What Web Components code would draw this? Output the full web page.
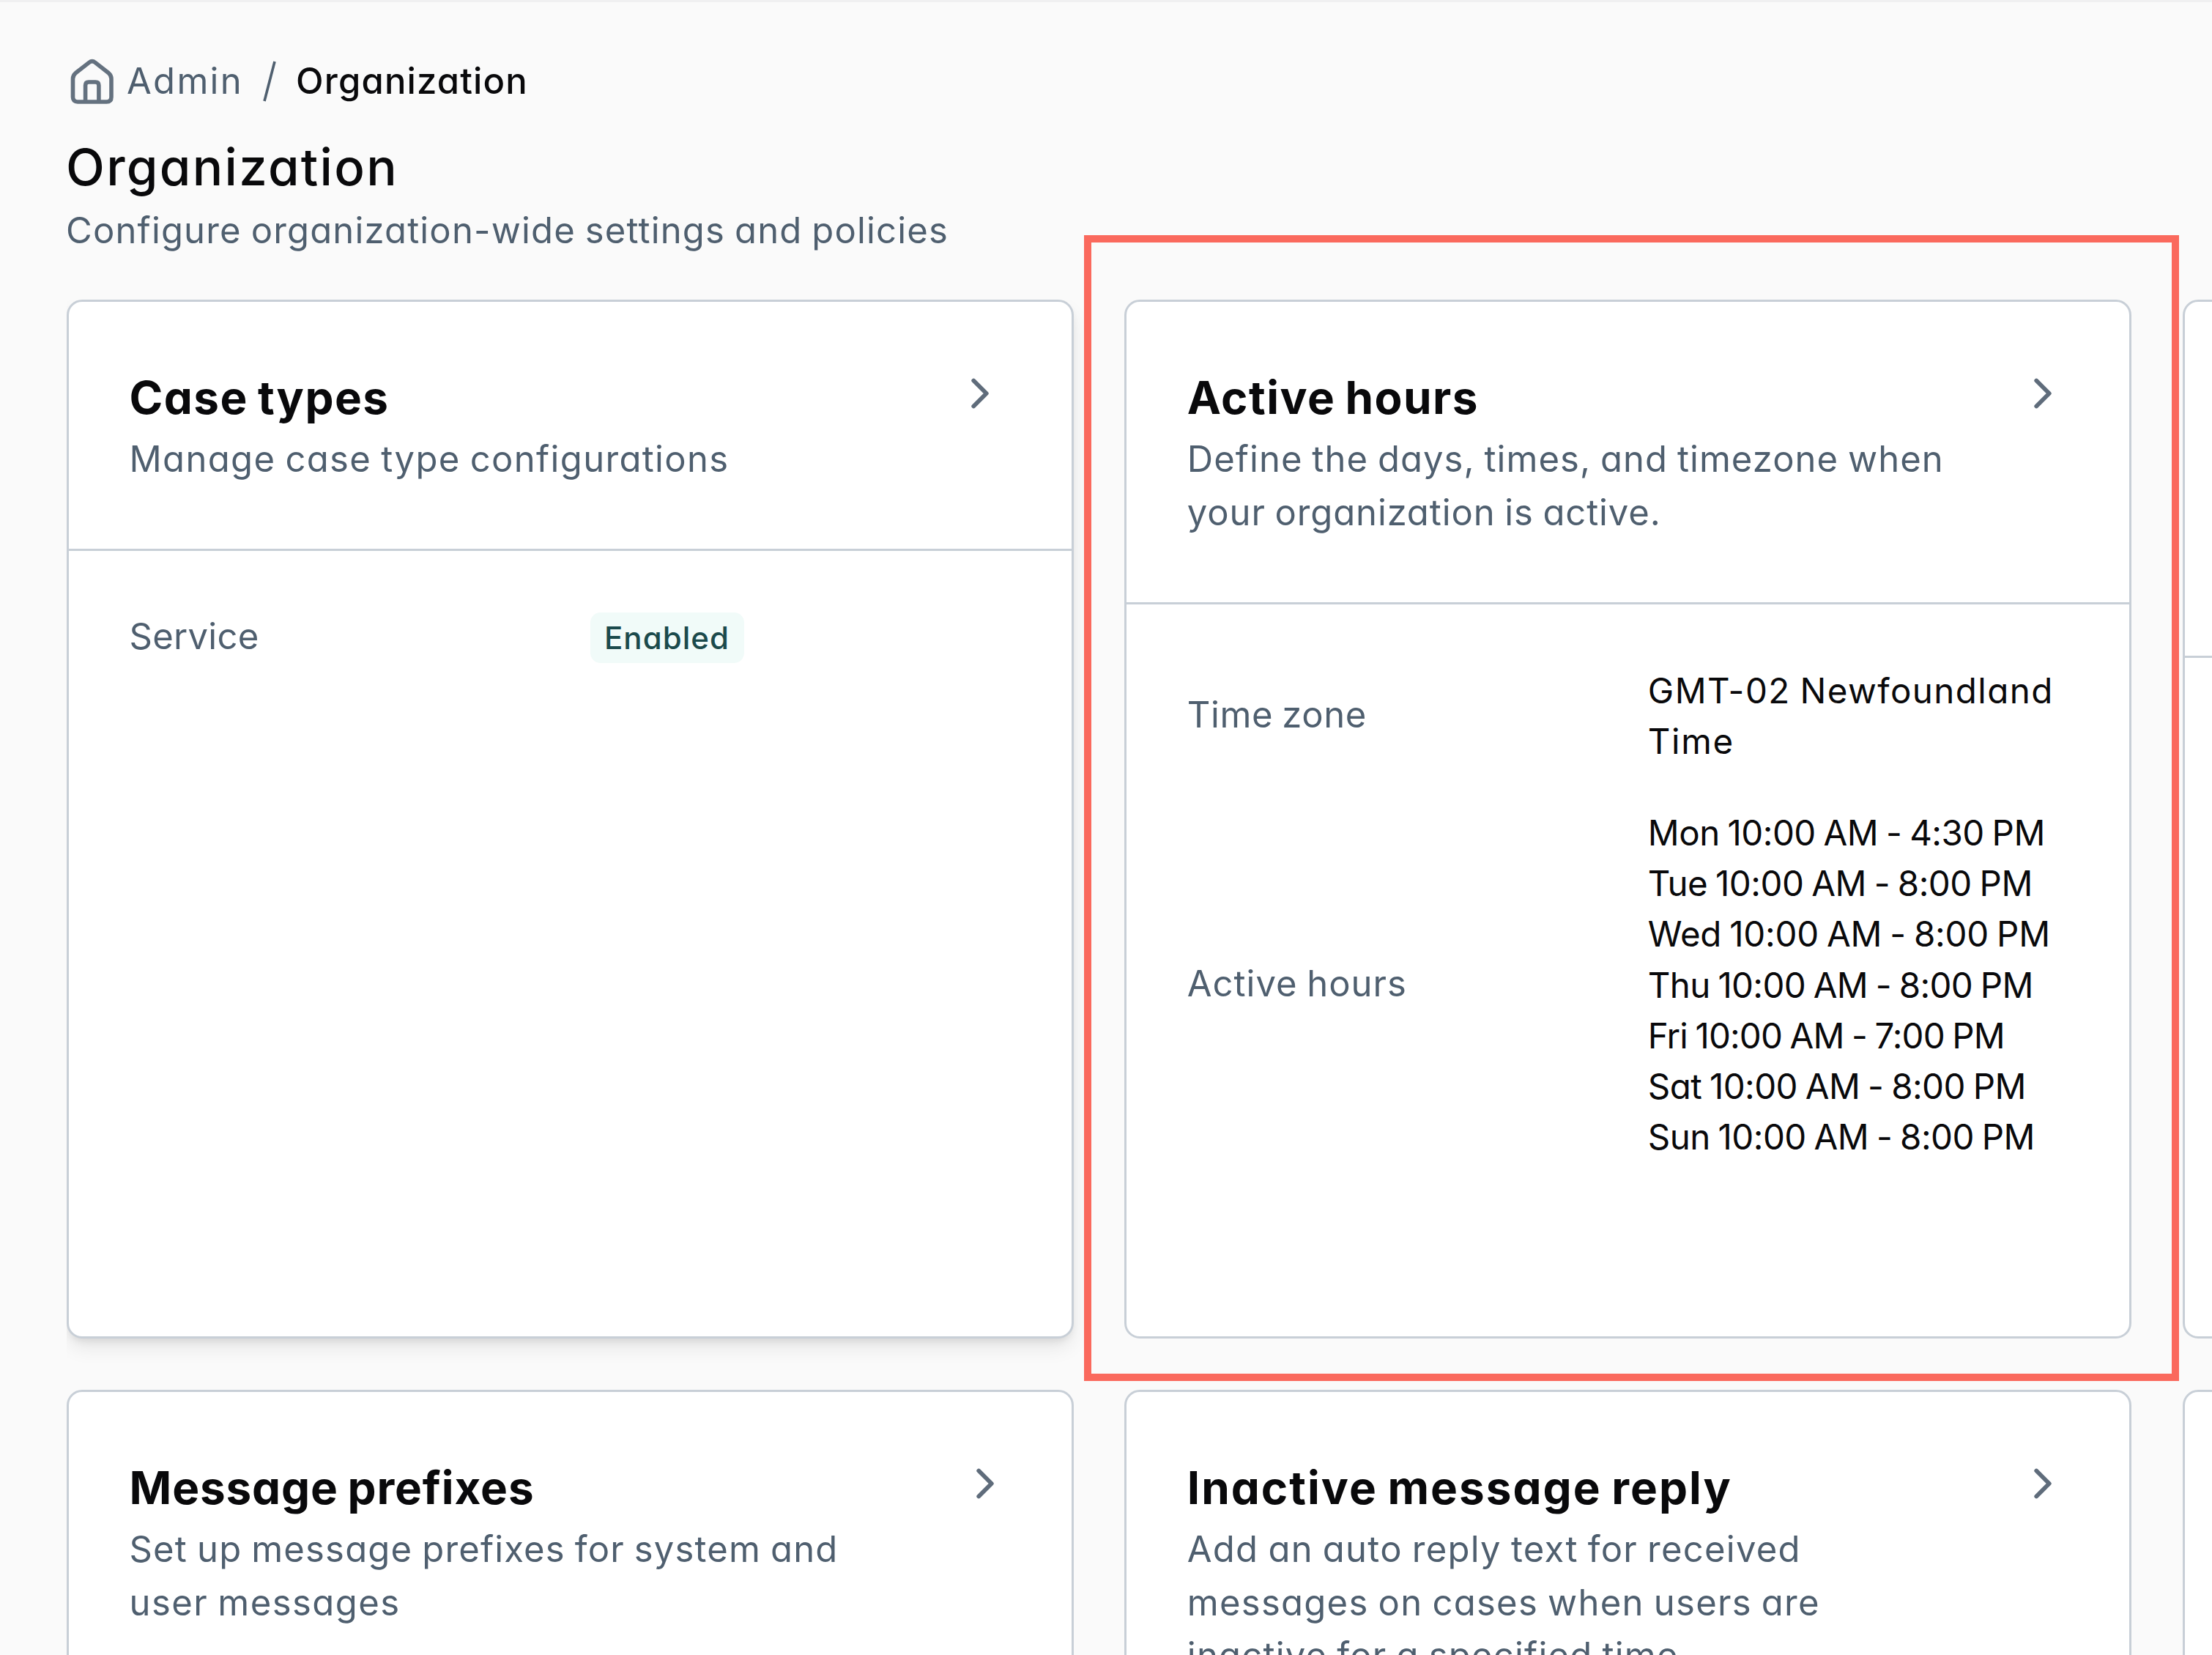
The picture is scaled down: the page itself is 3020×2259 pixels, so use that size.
<!DOCTYPE html>
<html lang="en">
<head>
<meta charset="utf-8">
<title>Organization</title>
<style>
  html, body {
    margin: 0;
    height: 2259px;
    overflow: hidden;
    background: #fafafa;
  }
  body {
    position: relative;
    font-family: Inter, "Open Sans", "Liberation Sans", sans-serif;
    font-feature-settings: "cv11";
    color: #09090b;
  }
</style>
</head>
<body>
  <admin-page>
    <bread-crumb slot="crumb">
      <ui-text variant="link" width="159">Admin</ui-text>
      <ui-text slot="current" variant="current" width="317">Organization</ui-text>
    </bread-crumb>
    <ui-text slot="title" variant="title" width="454">Organization</ui-text>
    <ui-text slot="subtitle" width="1205">Configure organization-wide settings and policies</ui-text>

    <settings-card hovered>
      <ui-text slot="title" variant="heading" width="355">Case types</ui-text>
      <ui-text slot="description" width="819">Manage case type configurations</ui-text>
      <info-row>
        <ui-text slot="label" width="177">Service</ui-text>
        <status-badge><ui-text variant="badge" width="171">Enabled</ui-text></status-badge>
      </info-row>
    </settings-card>

    <settings-card>
      <ui-text slot="title" variant="heading" width="398">Active hours</ui-text>
      <ui-text slot="description" width="1033">Define the days, times, and timezone when</ui-text>
      <ui-text slot="description" width="647">your organization is active.</ui-text>
      <info-row>
        <ui-text slot="label" width="245">Time zone</ui-text>
        <ui-text variant="value" width="554">GMT-02 Newfoundland</ui-text>
        <ui-text variant="value" width="118">Time</ui-text>
      </info-row>
      <info-row>
        <ui-text slot="label" width="300">Active hours</ui-text>
        <ui-text variant="value" width="542">Mon 10:00 AM - 4:30 PM</ui-text>
        <ui-text variant="value" width="525">Tue 10:00 AM - 8:00 PM</ui-text>
        <ui-text variant="value" width="549">Wed 10:00 AM - 8:00 PM</ui-text>
        <ui-text variant="value" width="526">Thu 10:00 AM - 8:00 PM</ui-text>
        <ui-text variant="value" width="487">Fri 10:00 AM - 7:00 PM</ui-text>
        <ui-text variant="value" width="516">Sat 10:00 AM - 8:00 PM</ui-text>
        <ui-text variant="value" width="528">Sun 10:00 AM - 8:00 PM</ui-text>
      </info-row>
    </settings-card>

    <settings-card lines="3"></settings-card>

    <settings-card>
      <ui-text slot="title" variant="heading" width="553">Message prefixes</ui-text>
      <ui-text slot="description" width="968">Set up message prefixes for system and</ui-text>
      <ui-text slot="description" width="370">user messages</ui-text>
    </settings-card>

    <settings-card>
      <ui-text slot="title" variant="heading" width="744">Inactive message reply</ui-text>
      <ui-text slot="description" width="838">Add an auto reply text for received</ui-text>
      <ui-text slot="description" width="864">messages on cases when users are</ui-text>
      <ui-text slot="description" width="671">inactive for a specified time</ui-text>
    </settings-card>

    <settings-card lines="3"></settings-card>
  </admin-page>
  <highlight-box></highlight-box>

<script>
class AdminPage extends HTMLElement {
  constructor() {
    super();

    this.attachShadow({ mode: 'open' });
    this.shadowRoot.innerHTML = `
    <style>
      :host {
        display: flex;
        flex-direction: column;
        box-sizing: border-box;
        height: 2259px;
        padding: 72px 0 0 91px;
        border-top: 3px solid #f0f0f1;
        overflow: hidden;
      }
      header {
        flex: none;
        height: 334px;
      }
      .title {
        margin-top: 30px;
      }
      .title, .subtitle {
        margin-left: -1px;
      }
      main {
        display: grid;
        grid-template-columns: repeat(3, 1375px);
        grid-template-rows: 1418px 1418px;
        gap: 70px 69.3px;
        /* card shadows stop at the edge of the grid */
        clip-path: inset(0 0 0 0);
      }
    </style>
    <header>
      <slot name="crumb"></slot>
      <div class="title"><slot name="title"></slot></div>
      <div class="subtitle"><slot name="subtitle"></slot></div>
    </header>
    <main><slot></slot></main>
    `;
  }
}

class BreadCrumb extends HTMLElement {
  constructor() {
    super();

    this.attachShadow({ mode: 'open' });
    this.shadowRoot.innerHTML = `
    <style>
      :host {
        display: flex;
        align-items: center;
        height: 72px;
        padding-left: 5px;
      }
      svg {
        width: 60px;
        height: 62px;
        margin-right: 17px;
      }
      .slash {
        width: 18px;
        height: 56px;
        margin: 0 27px;
      }
    </style>
    <svg viewBox="0 0 60 62" fill="none" stroke="#64717f" stroke-width="5.6" stroke-linejoin="round">
      <path d="M3.5 27.5c0-3.4 1.1-5.6 3.6-7.700L25.600 5.400q4.200-3.400 8.400 0L52.400 19.800c2.500 2.100 3.600 4.300 3.600 7.700V52.500q0 6.500-6.500 6.500H10q-6.500 0-6.500-6.500z"/>
      <path d="M20.600 58V36.500q0-4.500 4.500-4.500h9.300q4.500 0 4.500 4.500V58"/>
    </svg>
    <slot></slot>
    <svg class="slash" viewBox="0 0 18 56" stroke="#4f5f6f" stroke-width="3.600"><path d="M16 1L2 55"/></svg>
    <slot name="current"></slot>
    `;
  }
}

class SettingsCard extends HTMLElement {
  constructor() {
    super();

    this.attachShadow({ mode: 'open' });
    this.shadowRoot.innerHTML = `
    <style>
      :host {
        display: flex;
        flex-direction: column;
        box-sizing: border-box;
        border: 3px solid #c8cfd7;
        border-radius: 21px;
        background: #fff;
      }
      :host([hovered]) {
        box-shadow: 0 14px 28px -3px rgba(0, 0, 0, 0.09), 0 6px 12px -4px rgba(0, 0, 0, 0.1);
      }
      .head {
        display: flex;
        justify-content: space-between;
        padding: 89px 83px 85.500px 82.500px;
        border-bottom: 3px solid #c8cfd7;
      }
      .description {
        margin-top: 6px;
      }
      :host([lines="3"]) .head {
        min-height: 308px;
      }
      svg {
        flex: none;
        width: 70px;
        height: 70px;
        margin-top: 1px;
      }
      :host([hovered]) svg {
        margin-right: 7px;
      }
      .body {
        display: flex;
        flex-direction: column;
        gap: 55.600px;
        padding: 83px 82.500px;
      }
    </style>
    <div class="head">
      <div>
        <slot name="title"></slot>
        <div class="description"><slot name="description"></slot></div>
      </div>
      <svg viewBox="0 0 24 24" fill="none" stroke="#5f6c7b" stroke-width="2" stroke-linecap="round" stroke-linejoin="round">
        <path d="m9 18 6-6-6-6"/>
      </svg>
    </div>
    <div class="body"><slot></slot></div>
    `;
  }
}

class InfoRow extends HTMLElement {
  constructor() {
    super();

    this.attachShadow({ mode: 'open' });
    this.shadowRoot.innerHTML = `
    <style>
      :host {
        display: grid;
        grid-template-columns: 575px 575px;
        column-gap: 54px;
        align-items: center;
        min-height: 71px;
      }
      .label {
        margin: -3px 0 -1px;
      }
    </style>
    <div class="label"><slot name="label"></slot></div>
    <div><slot></slot></div>
    `;
  }
}

class StatusBadge extends HTMLElement {
  constructor() {
    super();

    this.attachShadow({ mode: 'open' });
    this.shadowRoot.innerHTML = `
    <style>
      :host {
        display: flex;
        justify-content: center;
        align-items: center;
        width: 210px;
        height: 69px;
        border-radius: 14px;
        background: #f1fbf9;
      }
    </style>
    <slot></slot>
    `;
  }
}

class HighlightBox extends HTMLElement {
  constructor() {
    super();

    this.attachShadow({ mode: 'open' });
    this.shadowRoot.innerHTML = `
    <style>
      :host {
        position: absolute;
        left: 1480px;
        top: 321px;
        box-sizing: border-box;
        width: 1495px;
        height: 1564px;
        border: 10px solid #fa695d;
      }
    </style>
    `;
  }
}

// One line of text, tracked so that it takes up `width` pixels
class UiText extends HTMLElement {
  constructor() {
    super();

    this.attachShadow({ mode: 'open' });
    this.shadowRoot.innerHTML = `
    <style>
      :host {
        display: block;
        white-space: nowrap;
        font-size: 49px;
        line-height: 72.500px;
        word-spacing: -2px;
        color: #4f5f6f;
      }
      :host([variant="current"]) {
        font-weight: 500;
        color: #09090b;
      }
      :host([variant="title"]) {
        font-size: 69px;
        line-height: 102px;
        font-weight: 500;
        color: #09090b;
      }
      :host([variant="heading"]) {
        font-size: 62px;
        line-height: 84px;
        font-weight: 650;
        word-spacing: -3px;
        color: #09090b;
      }
      :host([variant="value"]) {
        font-size: 47.500px;
        line-height: 69.300px;
        color: #09090b;
      }
      :host([variant="badge"]) {
        font-size: 42px;
        line-height: 68px;
        font-weight: 500;
        color: #1b4a4c;
      }
    </style>
    <span><slot></slot></span>
    `;

    this._span = this.shadowRoot.querySelector('span');
  }
  connectedCallback() {
    const width = Number(this.getAttribute('width'));
    const natural = this._span.getBoundingClientRect().width;
    const spacing = (width - natural) / this.textContent.length;
    this._span.style.letterSpacing = `${spacing.toFixed(3)}px`;
  }
}

customElements.define('admin-page', AdminPage);
customElements.define('bread-crumb', BreadCrumb);
customElements.define('settings-card', SettingsCard);
customElements.define('info-row', InfoRow);
customElements.define('status-badge', StatusBadge);
customElements.define('highlight-box', HighlightBox);
customElements.define('ui-text', UiText);
</script>
</body>
</html>
